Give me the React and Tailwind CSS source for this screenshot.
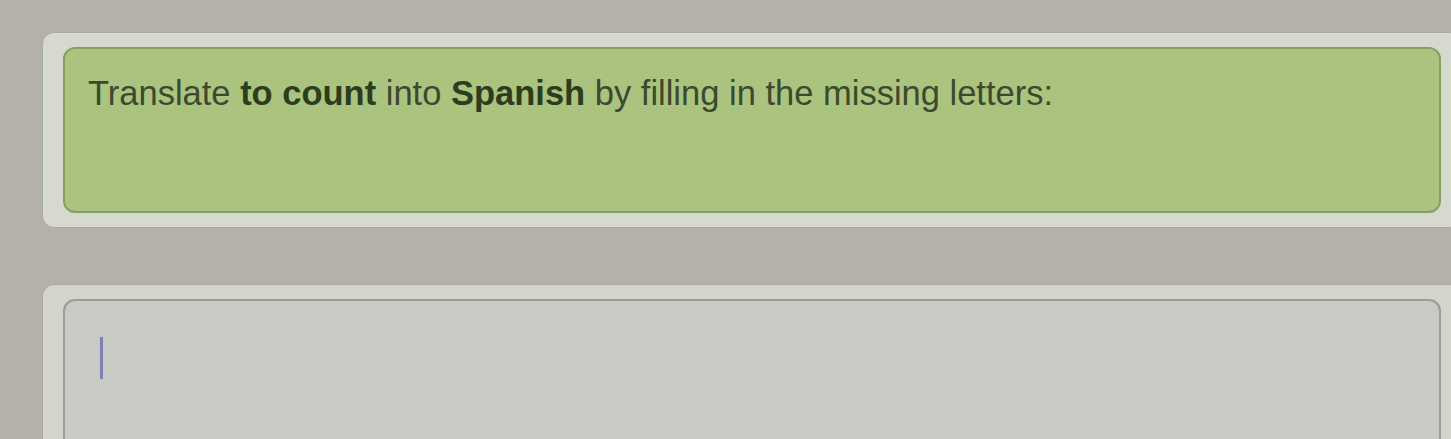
export default function App() {
  return (
    <div
      className="w-[1451px] h-[439px] overflow-hidden bg-[#b4b1a8] pt-[32px] pl-[42px] flex flex-col gap-[56px]"
      style={{ fontFamily: '"Liberation Sans", Arial, sans-serif' }}
    >
      <div className="w-[1420px] rounded-[12px] bg-[#d6d9cd] border border-[#a9aba0] px-[20px] py-[14px]">
        <div className="h-[166px] rounded-[12px] bg-[#aac37f] border-2 border-[#85a064] pl-[23px] pt-[24px]">
          <p className="text-[34.5px] leading-[40px] text-[#3b4a2e]">
            Translate <b className="font-bold text-[#2c3d1e]">to count</b> into{" "}
            <b className="font-bold text-[#2c3d1e]">Spanish</b> by filling in the missing letters:
          </p>
        </div>
      </div>
      <div className="w-[1420px] h-[200px] rounded-[12px] bg-[#d3d5cc] border border-[#a9aba0] px-[20px] pt-[14px]">
        <div className="h-[200px] rounded-[12px] bg-[#c8cac3] border-2 border-[#9a9d94] pl-[35px] pt-[36px]">
          <div className="w-[3px] h-[42px] bg-[#7d7fb8]" />
        </div>
      </div>
    </div>
  );
}
